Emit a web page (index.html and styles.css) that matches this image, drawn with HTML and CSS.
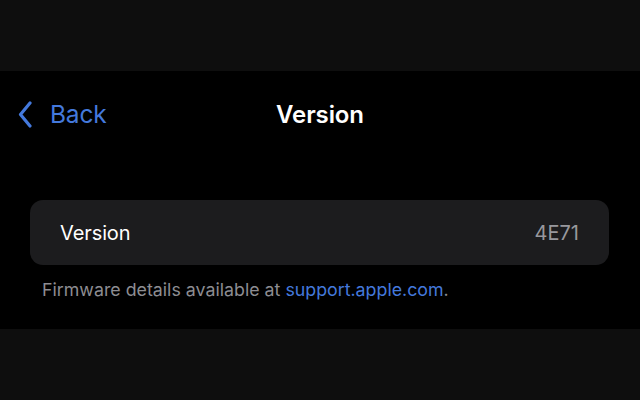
FILE: index.html
```html
<!DOCTYPE html>
<html>
<head>
<meta charset="utf-8">
<link rel="stylesheet" href="styles.css">
</head>
<body>
<div class="band-top"></div>
<main class="screen">
  <nav class="navbar">
    <a class="back">
      <svg class="chev" width="14" height="27" viewBox="0 0 14 27"><polyline points="12,2 2.5,13.5 12,25" fill="none" stroke="#4479dc" stroke-width="3.2" stroke-linecap="round" stroke-linejoin="round"/></svg>
      <span class="back-label">Back</span>
    </a>
    <h1 class="title">Version</h1>
  </nav>
  <section class="group">
    <div class="row">
      <span class="row-label">Version</span>
      <span class="row-value">4E71</span>
    </div>
  </section>
  <p class="footer">Firmware details available at <span class="link">support.apple.com</span>.</p>
</main>
<div class="band-bottom"></div>
</body>
</html>
```
FILE: styles.css
```css
html, body {
  margin: 0;
  padding: 0;
  background: #0e0e0e;
  font-family: Inter, "Noto Sans", "Liberation Sans", sans-serif;
  height: 100%;
}
.band-top {
  height: 71px;
  background: #0e0e0e;
}
.screen {
  background: #000;
  height: 258px;
  display: flex;
  flex-direction: column;
}
.navbar {
  height: 86px;
  position: relative;
  display: flex;
  align-items: center;
  justify-content: center;
}
.back {
  position: absolute;
  left: 18px;
  top: 0;
  bottom: 0;
  display: flex;
  align-items: center;
  gap: 18px;
  color: #4479dc;
}
.chev {
  display: block;
}
.back-label {
  font-size: 24.5px;
  font-weight: 400;
  letter-spacing: -0.2px;
}
.title {
  margin: 0;
  font-size: 24px;
  font-weight: 600;
  color: #fff;
  letter-spacing: -0.1px;
}
.group {
  margin: 43px 31px 0 30px;
  background: #1c1c1e;
  border-radius: 13px;
  height: 65px;
}
.row {
  height: 100%;
  display: flex;
  align-items: center;
  justify-content: space-between;
  padding: 0 30px 0 30px;
}
.row-label {
  font-size: 20px;
  color: #fff;
  letter-spacing: -0.1px;
}
.row-value {
  font-size: 20px;
  color: #98989d;
  letter-spacing: 0;
}
.footer {
  margin: 14px 0 0 42px;
  font-size: 17.8px;
  line-height: 22px;
  color: #8d8d92;
}
.link {
  color: #4479dc;
}
.band-bottom {
  height: 71px;
  background: #0e0e0e;
}
```
